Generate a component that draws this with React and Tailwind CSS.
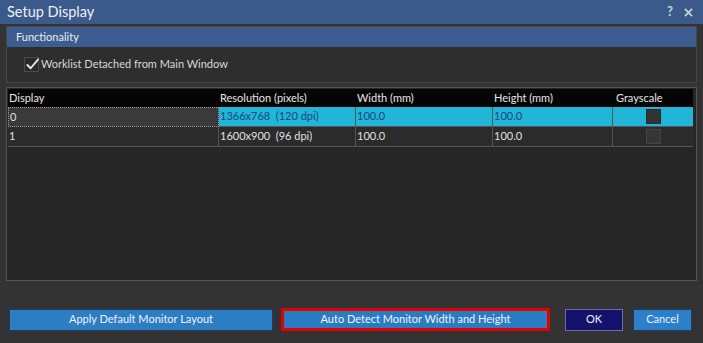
import React from "react";

const font = { fontFamily: 'Lato, "Noto Sans", sans-serif' };

const columns = [
  { label: "Display", pad: "px-[1px]" },
  { label: "Resolution (pixels)", pad: "px-[1px]" },
  { label: "Width (mm)", pad: "px-[1px]" },
  { label: "Height (mm)", pad: "px-[1px]" },
  { label: "Grayscale", pad: "pl-[3px]" },
];

const rows = [
  { display: "0", resolution: "1366x768  (120 dpi)", width: "100.0", height: "100.0", selected: true },
  { display: "1", resolution: "1600x900  (96 dpi)", width: "100.0", height: "100.0", selected: false },
];

function Check() {
  return (
    <div className="relative w-[15px] h-[15px] border border-[#4a4a4a] bg-[#2a2a2a]">
      <svg
        viewBox="0 0 16 16"
        className="absolute left-[0px] -top-[1px] w-[15px] h-[15px]"
        fill="none"
        stroke="#e6e6e6"
        strokeWidth="2"
        strokeLinecap="round"
        strokeLinejoin="round"
      >
        <path d="M2.5 8.5 6 12 14 2.5" />
      </svg>
    </div>
  );
}

export default function App() {
  return (
    <div
      className="w-[703px] h-[343px] bg-[#333333] flex flex-col overflow-hidden text-[11px] text-[#e0e0e0]"
      style={font}
    >
      <div className="h-[24px] bg-[#3b5a8c] flex items-center justify-between pl-[7px] pr-[10px]">
        <span className="text-[14.5px] text-[#f0f0f0] leading-none">Setup Display</span>
        <div className="flex items-center gap-[11px] text-[#c8d0dc] font-bold text-[13px]">
          <span>?</span>
          <svg viewBox="0 0 10 10" className="w-[9px] h-[9px]" stroke="#c8d0dc" strokeWidth="2">
            <path d="M1 1l8 8M9 1 1 9" />
          </svg>
        </div>
      </div>

      <div className="flex-1 flex flex-col pl-[6px] pr-[6px]">
        <div className="mt-[2px] border border-[#474747] bg-[#2e2e2e]">
          <div className="h-[20px] bg-[#3d5c90] flex items-center pl-[9px] text-[#e8ecf2]">
            Functionality
          </div>
          <div className="h-[35px] flex items-center pl-[17px] gap-[2px]">
            <Check />
            <span className="text-[#d8d8d8]">Worklist Detached from Main Window</span>
          </div>
        </div>

        <div className="mt-[4px] h-[194px] border border-[#555555] bg-[#262626] pt-[1px] pl-[1px]">
          <div className="grid grid-cols-[211px_137px_137px_120px_80px]">
            {columns.map((c) => (
              <div
                key={c.label}
                className={`h-[18px] bg-[#050505] flex items-center text-[#e6e6e6] ${c.pad}`}
              >
                {c.label}
              </div>
            ))}
            {rows.map((r) => (
              <React.Fragment key={r.display}>
                <div
                  className={`h-[20px] flex items-center px-[1px] ${
                    r.selected
                      ? "bg-[#3a3a3a] border border-dotted border-[#9a9a9a]"
                      : "bg-[#2b2b2b] border-b border-r border-[#555555]"
                  }`}
                >
                  {r.display}
                </div>
                {[r.resolution, r.width, r.height].map((v, i) => (
                  <div
                    key={i}
                    className={`h-[20px] flex items-center px-[1px] border-b border-r border-[#555555] whitespace-pre ${
                      r.selected ? "bg-[#21b6d8] text-[#1a4482]" : "bg-[#2b2b2b]"
                    }`}
                  >
                    {v}
                  </div>
                ))}
                <div
                  className={`h-[20px] flex items-center justify-center border-b border-[#555555] ${
                    r.selected ? "bg-[#21b6d8]" : "bg-[#2b2b2b]"
                  }`}
                >
                  <div
                    className={`w-[15px] h-[15px] border ${
                      r.selected ? "bg-[#333333] border-[#2a2a2a]" : "bg-[#363636] border-[#444444]"
                    }`}
                  />
                </div>
              </React.Fragment>
            ))}
          </div>
        </div>

        <div className="mt-[27px] flex items-center">
          <button className="ml-[3px] w-[264px] h-[22px] bg-[#2c7dc4] border border-[#1e3c64] text-[#eef4fa]">
            Apply Default Monitor Layout
          </button>
          <button className="ml-[8px] w-[269px] h-[23px] bg-[#2a7cc2] border-[3px] border-[#e40000] text-[#eef4fa]">
            Auto Detect Monitor Width and Height
          </button>
          <button className="ml-[15px] w-[58px] h-[22px] bg-[#14126b] border border-[#6c6ca6] text-[#eef0fa]">
            OK
          </button>
          <button className="ml-[10px] w-[59px] h-[22px] bg-[#2b80c9] border border-[#1d3d66] text-[#eef4fa]">
            Cancel
          </button>
        </div>
      </div>
    </div>
  );
}
